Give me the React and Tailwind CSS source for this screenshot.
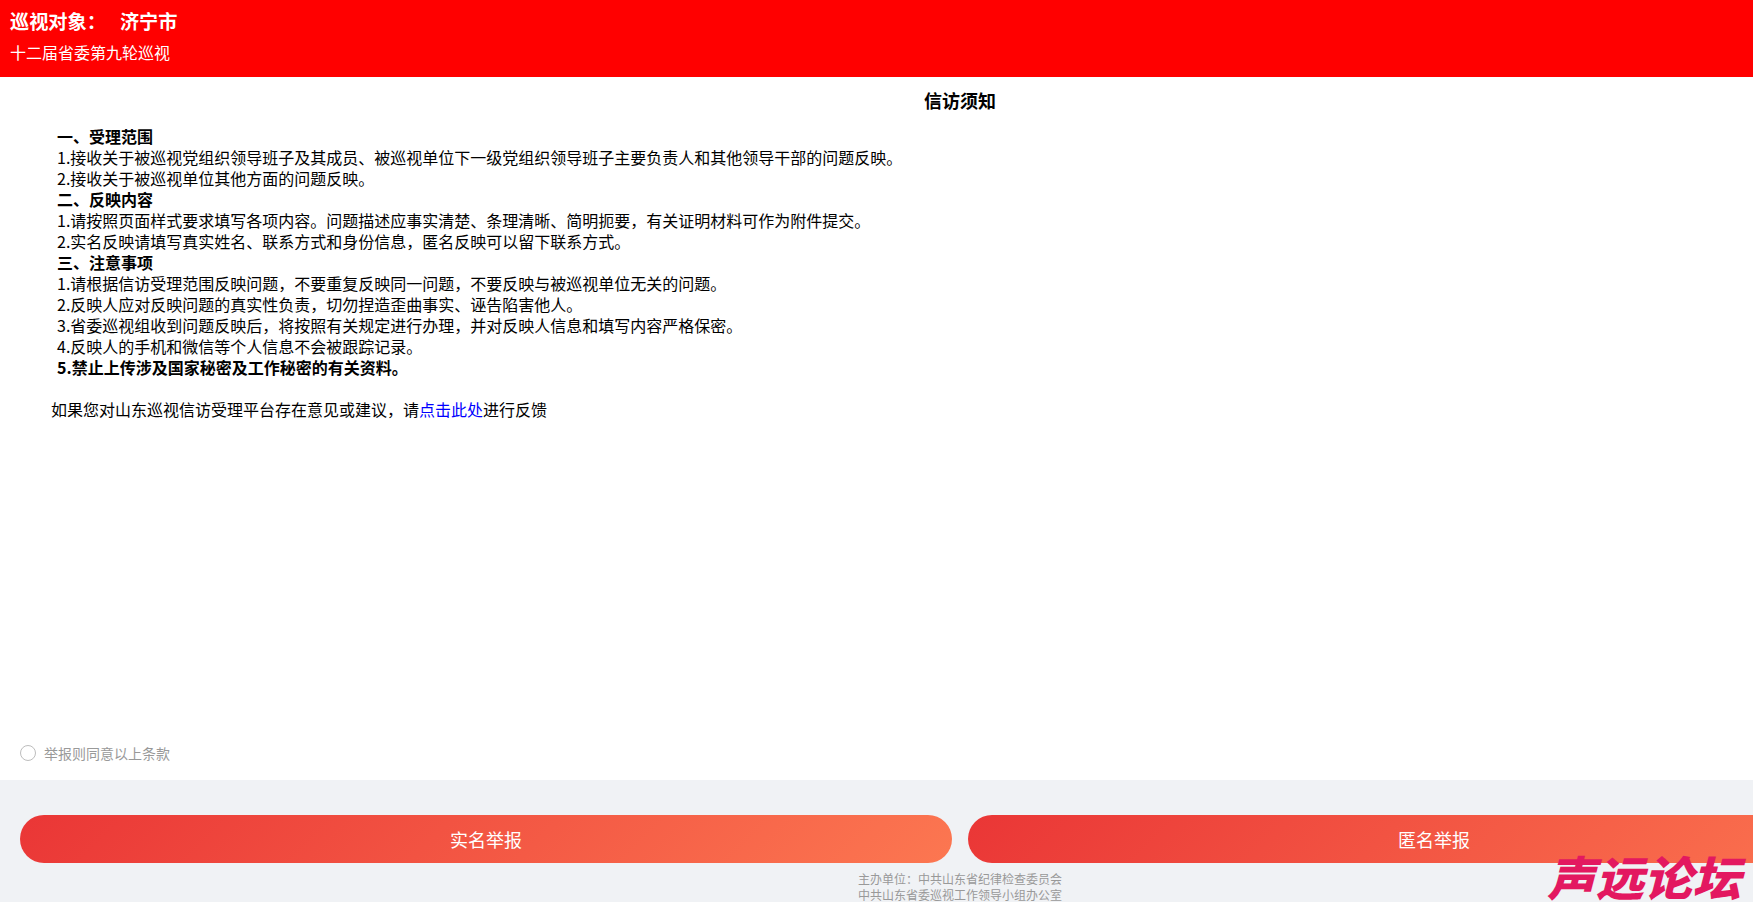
import React from "react";

const sections = [
    {
        title: "一、受理范围",
        items: [
            "1.接收关于被巡视党组织领导班子及其成员、被巡视单位下一级党组织领导班子主要负责人和其他领导干部的问题反映。",
            "2.接收关于被巡视单位其他方面的问题反映。",
        ],
    },
    {
        title: "二、反映内容",
        items: [
            "1.请按照页面样式要求填写各项内容。问题描述应事实清楚、条理清晰、简明扼要，有关证明材料可作为附件提交。",
            "2.实名反映请填写真实姓名、联系方式和身份信息，匿名反映可以留下联系方式。",
        ],
    },
    {
        title: "三、注意事项",
        items: [
            "1.请根据信访受理范围反映问题，不要重复反映同一问题，不要反映与被巡视单位无关的问题。",
            "2.反映人应对反映问题的真实性负责，切勿捏造歪曲事实、诬告陷害他人。",
            "3.省委巡视组收到问题反映后，将按照有关规定进行办理，并对反映人信息和填写内容严格保密。",
            "4.反映人的手机和微信等个人信息不会被跟踪记录。",
        ],
    },
];

function ReportButton({children}) {
    return (
        <button className="flex-1 h-12 rounded-3xl bg-linear-[135deg,#ea3636,#fc7751] text-white text-lg">
            {children}
        </button>
    );
}

export default function App() {
    return (
        <div className="relative w-screen h-screen overflow-hidden bg-white text-black font-['Noto_Sans_CJK_SC',sans-serif]">
            <div className="w-[1920px] h-full flex flex-col">
                <header className="h-[77px] bg-[#ff0000] text-white px-[10px] pt-[7px]">
                    <h1 className="text-[19.2px] leading-7 font-bold">
                        巡视对象：<span className="ml-[14px]">济宁市</span>
                    </h1>
                    <p className="mt-[5px] text-base leading-6">十二届省委第九轮巡视</p>
                </header>

                <main className="flex-1 flex flex-col pt-[13px]">
                    <h2 className="text-center text-lg leading-[21px] font-bold">信访须知</h2>
                    <div className="mt-[15px] pl-[57px] text-base leading-[21px]">
                        {sections.map((section) => (
                            <div key={section.title}>
                                <p className="font-bold">{section.title}</p>
                                {section.items.map((item) => <p key={item}>{item}</p>)}
                            </div>
                        ))}
                        <p className="font-bold">5.禁止上传涉及国家秘密及工作秘密的有关资料。</p>
                    </div>
                    <p className="mt-[21px] pl-[51px] text-base leading-[21px]">
                        如果您对山东巡视信访受理平台存在意见或建议，请<a href="#" className="text-[#0000ff]">点击此处</a>进行反馈
                    </p>
                    <label className="mt-auto mb-[19px] ml-5 flex items-center gap-2 text-sm leading-4 text-[#999]">
                        <span className="w-4 h-4 rounded-full border border-[#bdbdbd]"></span>
                        举报则同意以上条款
                    </label>
                </main>

                <footer className="h-[122px] bg-[#f0f2f5] px-5 pt-[35px]">
                    <div className="flex gap-4">
                        <ReportButton>实名举报</ReportButton>
                        <ReportButton>匿名举报</ReportButton>
                    </div>
                    <div className="mt-2 text-center text-xs leading-4 text-[#999]">
                        <p>主办单位：中共山东省纪律检查委员会</p>
                        <p>中共山东省委巡视工作领导小组办公室</p>
                    </div>
                </footer>
            </div>
            {/* watermark over the corner */}
            <div className="absolute right-0 bottom-[6px] w-[200px] origin-right scale-x-[1.03] text-[47px] leading-[40px] font-black italic text-[#e31860] whitespace-nowrap">
                声远论坛
            </div>
        </div>
    );
}
